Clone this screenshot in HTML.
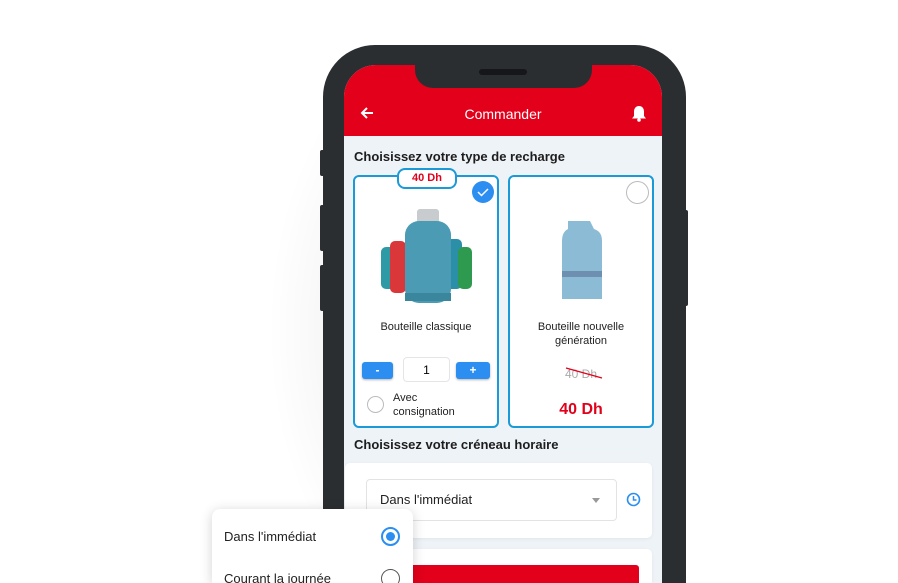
<!DOCTYPE html>
<html style="width:898px;height:583px;overflow:hidden"><head><meta charset="utf-8"><style>
*{margin:0;padding:0;box-sizing:border-box}
body{width:898px;height:583px;overflow:hidden;background:#fff;position:relative;font-family:"Liberation Sans",Arial,sans-serif}
.shadow{position:absolute;left:200px;top:0;width:500px;height:583px;background:radial-gradient(ellipse 260px 420px at 250px 330px,rgba(0,0,0,.10),rgba(0,0,0,0) 70%)}
.frame{position:absolute;left:323px;top:45px;width:363px;height:538px;background:#2b2e31;border-radius:52px 52px 0 0}
.btn{position:absolute;background:#2b2e31;border-radius:2px}
.screen{position:absolute;left:344px;top:65px;width:318px;height:518px;background:#eef3f7;border-radius:32px 32px 0 0;overflow:hidden}
.hdr{position:absolute;left:0;top:0;width:318px;height:71px;background:#e2001a}
.notch{position:absolute;left:71px;top:-2px;width:177px;height:25px;background:#2b2e31;border-radius:0 0 18px 18px}
.spk{position:absolute;left:64px;top:6px;width:48px;height:6px;border-radius:3px;background:#15171a}
.title{position:absolute;left:0;width:318px;top:41px;text-align:center;color:#fff;font-size:14px}
h2{position:absolute;font-size:13px;font-weight:bold;color:#1d1d1d}
.card{position:absolute;background:#fff;border:2px solid #1a9ad6;border-radius:6px}
.lbl{position:absolute;width:100%;text-align:center;font-size:11px;color:#222;line-height:14px}
.bl{position:absolute;background:#2b8ef0;color:#fff;font-size:12px;font-weight:bold;text-align:center;border-radius:3px;height:17px;line-height:17px;box-shadow:0 1px 2px rgba(0,0,0,.3)}
.rad{position:absolute;border:1.5px solid #bbb;border-radius:50%;background:#fff}
.box{position:absolute;background:#fff;border-radius:5px;box-shadow:0 1px 3px rgba(0,0,0,.06)}
</style></head><body>
<div class="shadow"></div>
<div class="btn" style="left:320px;top:150px;width:5px;height:26px"></div>
<div class="btn" style="left:320px;top:205px;width:5px;height:46px"></div>
<div class="btn" style="left:320px;top:265px;width:5px;height:46px"></div>
<div class="btn" style="left:683px;top:210px;width:5px;height:96px"></div>
<div class="frame"></div>
<div class="screen">
 <div class="hdr">
  <div class="notch"><div class="spk"></div></div>
  <svg style="position:absolute;left:16px;top:41px" width="14" height="14" viewBox="0 0 14 14"><path d="M13 7H2M7 2L2 7l5 5" stroke="#fff" stroke-width="2" fill="none"/></svg>
  <div class="title">Commander</div>
  <svg style="position:absolute;left:287px;top:40px" width="16" height="17" viewBox="0 0 16 17"><path d="M8 1c-3 0-5 2.3-5 5.5V11l-2 2.5h14L13 11V6.5C13 3.3 11 1 8 1z" fill="#fff"/><circle cx="8" cy="15" r="1.8" fill="#fff"/></svg>
 </div>
 <h2 style="left:10px;top:84px">Choisissez votre type de recharge</h2>
 <div class="card" style="left:9px;top:110px;width:146px;height:253px">
  <div style="position:absolute;left:42px;top:-9px;width:60px;height:21px;border:2px solid #1a9ad6;border-radius:8px;background:#fff;color:#e2001a;font-weight:bold;font-size:11px;text-align:center;line-height:17px">40 Dh</div>
  <div style="position:absolute;left:117px;top:4px;width:22px;height:22px;border-radius:50%;background:#2b8ef0"><svg width="22" height="22"><path d="M6 11l3.5 3.5L16 8" stroke="#fff" stroke-width="1.5" fill="none"/></svg></div>
  <svg style="position:absolute;left:24px;top:30px" width="96" height="100" viewBox="0 0 96 100">
   <rect x="2" y="40" width="14" height="42" rx="5" fill="#2e9aa6"/><rect x="11" y="34" width="16" height="52" rx="5" fill="#d9373a"/>
   <rect x="66" y="32" width="17" height="50" rx="5" fill="#2b8fa8"/><rect x="79" y="40" width="14" height="42" rx="5" fill="#2e9a4f"/>
   <rect x="38" y="2" width="22" height="14" rx="3" fill="#c8cccf"/>
   <rect x="26" y="14" width="46" height="82" rx="14" fill="#4a9bb3"/><rect x="26" y="86" width="46" height="8" fill="#3a869c"/>
  </svg>
  <div class="lbl" style="top:143px">Bouteille classique</div>
  <div class="bl" style="left:7px;top:185px;width:31px">-</div>
  <div style="position:absolute;left:48px;top:180px;width:47px;height:25px;border:1px solid #e5e5e5;border-radius:4px;text-align:center;line-height:24px;font-size:12px">1</div>
  <div class="bl" style="left:101px;top:185px;width:34px">+</div>
  <div class="rad" style="left:12px;top:219px;width:17px;height:17px"></div>
  <div style="position:absolute;left:38px;top:214px;font-size:11px;color:#222;line-height:14px">Avec<br>consignation</div>
 </div>
 <div class="card" style="left:164px;top:110px;width:146px;height:253px">
  <div class="rad" style="left:116px;top:4px;width:23px;height:23px;border-width:1px"></div>
  <svg style="position:absolute;left:48px;top:42px" width="48" height="84" viewBox="0 0 48 84"><path d="M10 2h22l4 8c6 2 8 6 8 12v58H4V22c0-6 2-10 6-12z" fill="#8cbbd6"/><rect x="4" y="52" width="40" height="6" fill="#6f8fb0"/></svg>
  <div class="lbl" style="top:143px">Bouteille nouvelle<br>génération</div>
  <div style="position:absolute;left:0;width:100%;top:190px;text-align:center;font-size:12px;color:#aaa">40 Dh</div>
  <svg style="position:absolute;left:54px;top:188px" width="40" height="16"><path d="M2 3L38 13" stroke="#e2001a" stroke-width="1.2"/></svg>
  <div style="position:absolute;left:0;width:100%;top:224px;text-align:center;font-size:16px;font-weight:bold;color:#e2001a">40 Dh</div>
 </div>
 <h2 style="left:10px;top:372px">Choisissez votre créneau horaire</h2>
 <div class="box" style="left:1px;top:398px;width:307px;height:75px">
  <div style="position:absolute;left:21px;top:16px;width:251px;height:42px;border:1px solid #e3e3e3;border-radius:4px;font-size:13px;color:#222;line-height:40px;padding-left:13px">Dans l'immédiat
   <div style="position:absolute;right:16px;top:18px;border:4px solid transparent;border-top:5px solid #999"></div></div>
  <svg style="position:absolute;left:281px;top:29px" width="15" height="15"><circle cx="7.5" cy="7.5" r="6" stroke="#2b8ef0" stroke-width="1.6" fill="none"/><path d="M7.5 4v4h3" stroke="#2b8ef0" stroke-width="1.5" fill="none"/></svg>
 </div>
 <div class="box" style="left:1px;top:484px;width:307px;height:34px;border-radius:5px 5px 0 0">
  <div style="position:absolute;left:65px;top:16px;width:229px;height:18px;background:#e2001a;border-radius:3px 3px 0 0"></div>
 </div>
</div>
<div style="position:absolute;left:212px;top:509px;width:201px;height:74px;background:#fff;border-radius:8px 8px 0 0;box-shadow:0 2px 12px rgba(0,0,0,.18)">
 <div style="position:absolute;left:12px;top:20px;font-size:13px;color:#222">Dans l'immédiat</div>
 <div style="position:absolute;left:169px;top:18px;width:19px;height:19px;border:2px solid #2b8ef0;border-radius:50%"><div style="position:absolute;left:3px;top:3px;width:9px;height:9px;border-radius:50%;background:#2b8ef0"></div></div>
 <div style="position:absolute;left:12px;top:62px;font-size:13px;color:#222">Courant la journée</div>
 <div style="position:absolute;left:169px;top:60px;width:19px;height:19px;border:1.5px solid #555;border-radius:50%"></div>
</div>
</body></html>
